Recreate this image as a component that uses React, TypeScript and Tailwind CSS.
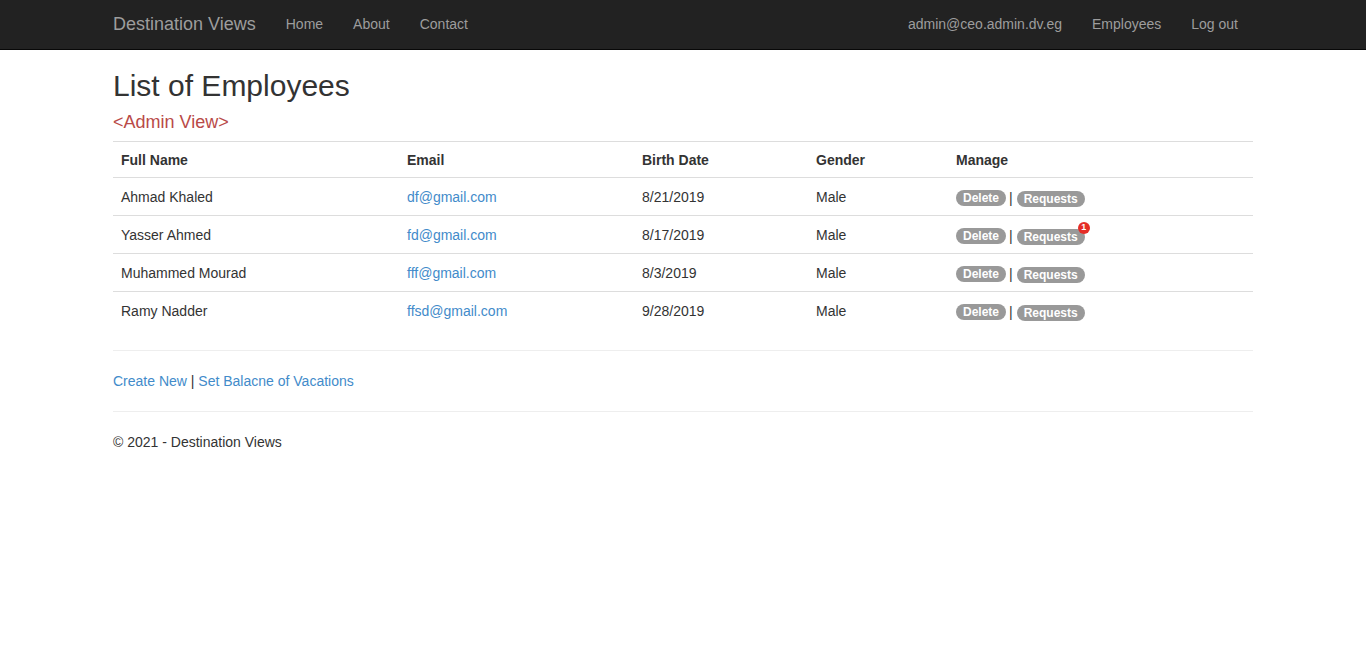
import React from "react";

const NAV_LEFT = ["Home", "About", "Contact"];
const NAV_RIGHT = ["admin@ceo.admin.dv.eg", "Employees", "Log out"];

const EMPLOYEES = [
  { name: "Ahmad Khaled", email: "df@gmail.com", birth: "8/21/2019", gender: "Male", pending: 0 },
  { name: "Yasser Ahmed", email: "fd@gmail.com", birth: "8/17/2019", gender: "Male", pending: 1 },
  { name: "Muhammed Mourad", email: "fff@gmail.com", birth: "8/3/2019", gender: "Male", pending: 0 },
  { name: "Ramy Nadder", email: "ffsd@gmail.com", birth: "9/28/2019", gender: "Male", pending: 0 },
];

const COLS = ["w-[286px]", "w-[235px]", "w-[174px]", "w-[140px]", ""];

function Pill({ children }: { children: React.ReactNode }) {
  return (
    <span className="inline-block rounded-[10px] bg-[#999999] px-[7px] py-[2px] text-[12px] font-bold leading-none text-white align-middle">
      {children}
    </span>
  );
}

export default function App() {
  return (
    <div
      className="min-h-screen bg-white text-[14px] leading-5 text-[#333333]"
      style={{ fontFamily: "'Liberation Sans', Arial, sans-serif" }}
    >
      {/* Navbar */}
      <nav className="h-[50px] border-b border-[#080808] bg-[#222222]">
        <div className="mx-auto flex h-[49px] w-[1140px] items-center pb-[1px]">
          <span className="text-[18px] leading-5 text-[#9d9d9d]">Destination Views</span>
          <ul className="ml-[15px] flex">
            {NAV_LEFT.map((l) => (
              <li key={l} className="px-[15px] text-[#9d9d9d]">
                {l}
              </li>
            ))}
          </ul>
          <ul className="ml-auto flex">
            {NAV_RIGHT.map((l) => (
              <li key={l} className="px-[15px] text-[#9d9d9d]">
                {l}
              </li>
            ))}
          </ul>
        </div>
      </nav>

      <main className="mx-auto w-[1140px]">
        <h2 className="mt-[19px] text-[30px] leading-[33px] text-[#333333]">List of Employees</h2>
        <h4 className="mt-[10px] text-[18px] leading-[20px] text-[#b94a48]">&lt;Admin View&gt;</h4>

        <table className="mt-[9px] w-full border-collapse">
          <tbody>
            <tr className="border-t border-[#dddddd]">
              {["Full Name", "Email", "Birth Date", "Gender", "Manage"].map((h, i) => (
                <th key={h} className={`${COLS[i]} h-[36px] px-2 text-left font-bold`}>
                  {h}
                </th>
              ))}
            </tr>
            {EMPLOYEES.map((e) => (
              <tr key={e.name} className="border-t border-[#dddddd]">
                <td className="h-[38px] px-2">{e.name}</td>
                <td className="px-2 text-[#428bca]">{e.email}</td>
                <td className="px-2">{e.birth}</td>
                <td className="px-2">{e.gender}</td>
                <td className="px-2">
                  <span className="inline-flex items-center pt-[2px]">
                    <Pill>Delete</Pill>
                    <span className="ml-[3px] mr-[4px]">|</span>
                    <span className="relative">
                      <Pill>Requests</Pill>
                      {e.pending > 0 && (
                        <span className="absolute right-[-5px] top-[-4px] flex h-[12px] w-[12px] items-center justify-center rounded-full bg-[#e52d27] text-[9px] font-bold leading-none text-white">
                          {e.pending}
                        </span>
                      )}
                    </span>
                  </span>
                </td>
              </tr>
            ))}
          </tbody>
        </table>

        <hr className="mt-[20px] border-t border-[#eeeeee]" />
        <p className="mt-[20px]">
          <a className="text-[#428bca]">Create New</a> |{" "}
          <a className="text-[#428bca]">Set Balacne of Vacations</a>
        </p>
        <hr className="mt-[20px] border-t border-[#eeeeee]" />
        <footer>
          <p className="mt-[20px]">© 2021 - Destination Views</p>
        </footer>
      </main>
    </div>
  );
}
